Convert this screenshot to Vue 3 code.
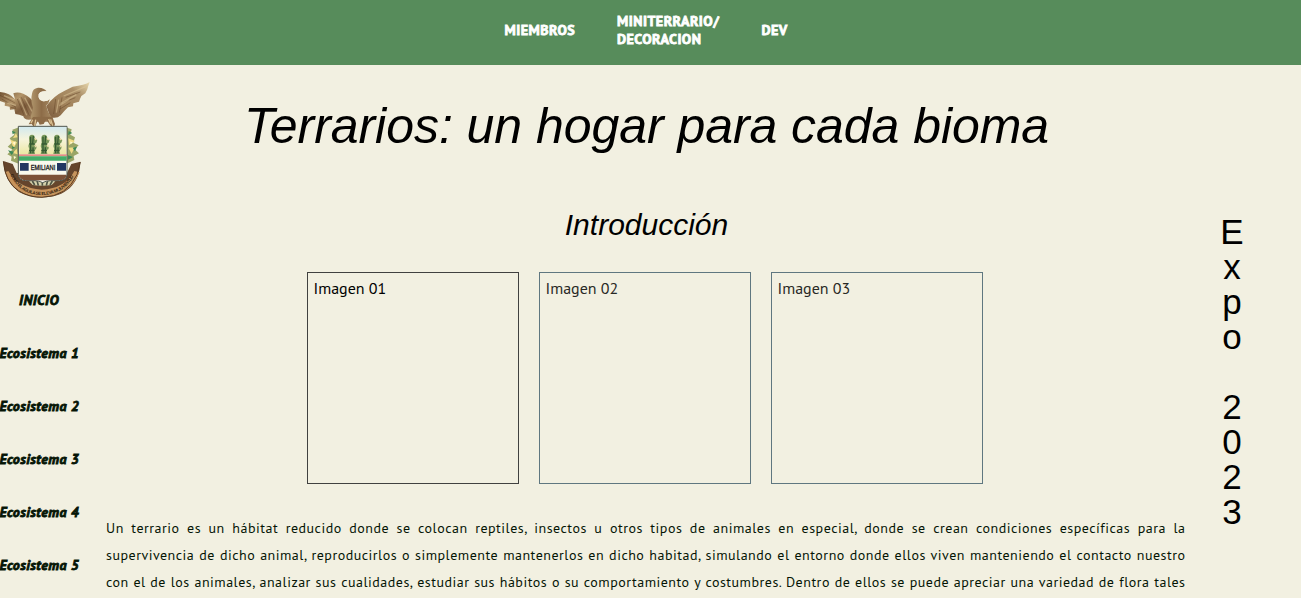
<script setup>
const ecosystems = ['Ecosistema 1', 'Ecosistema 2', 'Ecosistema 3', 'Ecosistema 4', 'Ecosistema 5']
const images = ['Imagen 01', 'Imagen 02', 'Imagen 03']
const expo = ['E', 'x', 'p', 'o', '\u00a0', '2', '0', '2', '3']
const lines = [
  'Un terrario es un hábitat reducido donde se colocan reptiles, insectos u otros tipos de animales en especial, donde se crean condiciones específicas para la',
  'supervivencia de dicho animal, reproducirlos o simplemente mantenerlos en dicho habitad, simulando el entorno donde ellos viven manteniendo el contacto nuestro',
  'con el de los animales, analizar sus cualidades, estudiar sus hábitos o su comportamiento y costumbres. Dentro de ellos se puede apreciar una variedad de flora tales',
]
</script>

<template>
  <div class="page">
    <header class="topbar">
      <a class="members">MIEMBROS</a>
      <a class="mini">MINITERRARIO/<br />DECORACION</a>
      <a class="dev">DEV</a>
    </header>
    <div class="body">
      <aside class="side">
        <svg class="crest" viewBox="0 0 300 420" width="100" height="140">
          <defs>
            <linearGradient id="wing" x1="0" y1="0" x2="1" y2="1">
              <stop offset="0" stop-color="#715232" />
              <stop offset=".35" stop-color="#b3956a" />
              <stop offset=".6" stop-color="#7d5c3c" />
              <stop offset="1" stop-color="#a58660" />
            </linearGradient>
            <linearGradient id="wingr" x1="1" y1="0" x2="0" y2="1">
              <stop offset="0" stop-color="#eadbb0" />
              <stop offset=".3" stop-color="#ab8f68" />
              <stop offset=".6" stop-color="#a1825a" />
              <stop offset="1" stop-color="#7d5d3f" />
            </linearGradient>
            <linearGradient id="chest" x1="0" y1="0" x2="1" y2="0">
              <stop offset="0" stop-color="#b0966c" />
              <stop offset=".5" stop-color="#8d6c48" />
              <stop offset="1" stop-color="#a78b64" />
            </linearGradient>
            <linearGradient id="sky" x1="0" y1="0" x2="0" y2="1">
              <stop offset="0" stop-color="#d3e9ee" />
              <stop offset=".45" stop-color="#f6f4dc" />
              <stop offset="1" stop-color="#ebe8a4" />
            </linearGradient>
            <path id="motto" d="M31 314 Q58 374 124 375 Q194 374 226 310" />
          </defs>
          <!-- leaves and flowers beside the shield -->
          <g>
            <path d="M53 173 L37 179 L43 194 L29 205 L37 217 L23 230 L37 239 L22 253 L35 260 L33 272 L58 282 V173Z" fill="#9aa566" />
            <path d="M201 173 L215 178 L211 194 L225 202 L220 218 L236 226 L224 238 L237 250 L221 258 L223 270 L198 282Z" fill="#9aa566" />
            <path d="M48 190l5 12-14 2zM31 209l20 8-10 18zM50 236l3 17-15-4zM205 205l20 8-18 13zM205 233l19-1-9 19z" fill="#f3dc86" />
            <path d="M36 182l11 5-9 6zM24 241l18 4-7 10zM206 183l11 6-13 6zM218 233l13-3-6 14zM204 256l15 5-15 8zM37 228l8 5-9 4z" fill="#3c8957" />
            <path d="M38 218l9-4-3 12zM211 214l8 4-8 4zM41 258l8 3-7 7z" fill="#fff9d0" />
          </g>
          <!-- eagle -->
          <path d="M0 66 Q30 69 45 88 L40 70 Q52 65 70 71 Q93 80 108 107 L102 147 Q73 154 70 139 L58 134 L46 132 L43 118 L30 119 L29 110 L14 107 L15 98 L0 93Z" fill="url(#wing)" />
          <path d="M139 108 Q160 78 194 62 L218 50 Q254 46 269 36 L264 50 L262 58 L256 70 L244 78 L240 87 L237 95 L220 100 L219 109 L204 112 L193 123 L182 136 Q172 147 151 142Z" fill="url(#wingr)" />
          <path d="M0 76 L44 98 M5 87 L48 112 M32 112L48 115 M52 87 L72 136 M64 82 L88 137 M241 66 L197 82 M226 83L190 97 M211 98 L180 117 M186 82L178 128 M167 87L161 132" fill="none" stroke="#604024" stroke-width="3" opacity=".45" />
          <path d="M12 77 L44 90 M22 99 L48 106 M58 84 L80 136 M74 83L96 124 M257 50 L191 78 M229 74 L181 101 M207 88 L178 107 M176 89L169 128" fill="none" stroke="#dfc99b" stroke-width="4" opacity=".5" />
          <path d="M96 71 Q98 55 114 53 Q131 52 140 64 Q121 61 116 73 Q113 90 129 94 Q143 95 149 87 Q147 101 139 106 Q143 130 157 143 L151 155 L99 155 L92 142 L99 113 Q91 91 96 71Z" fill="url(#chest)" />
          <path d="M140 64 Q121 61 116 73 Q113 90 129 94 Q143 95 149 87 Q152 72 140 64Z" fill="#f2f0e1" />
          <path d="M99 141 L86 163 L95 162 L104 175 L113 151 L119 164 L131 162 L139 148 L148 163 L160 176 L165 162 L157 140Z" fill="#8c6b47" />
          <path d="M98 149l-5 11M107 149l-3 20M146 147l6 14M152 148l7 22" stroke="#dcc293" stroke-width="4" />
          <!-- ribbon -->
          <path d="M10 273 L38 282 L50 309 L201 309 L214 282 L241 275 C239 342 197 382 126 382 C57 382 13 341 10 273Z" fill="#65452c" />
          <path d="M25 303 Q55 355 125 359 Q196 356 223 303 L239 307 Q207 381 126 381 Q43 379 14 307Z" fill="#c7945c" />
          <path d="M10 274 Q15 335 56 364 Q91 383 126 382 Q201 380 231 314 L241 276" fill="none" stroke="#58391f" stroke-width="3" />
          <path d="M87 334 Q127 327 166 334 L155 345 Q126 350 98 345Z" fill="#d5d2ac" />
          <path d="M97 333l7 12M111 331l4 16M127 330v17M143 331l-4 16M157 333l-7 12" stroke="#4f5445" stroke-width="5" />
          <text class="motto"><textPath href="#motto" textLength="236">COMO EL AGUILA SE ELEVA MI JUVENTUD</textPath></text>
          <!-- shield -->
          <path d="M55 169 H201 V315 Q199 330 179 332 H151 Q139 332 128 338 Q117 332 105 332 H76 Q57 330 55 314Z" fill="#faf9ed" stroke="#4d5650" stroke-width="3" />
          <path d="M58 171H199V252H58Z" fill="url(#sky)" />
          <g v-for="x in [96, 133, 171]" :key="x" :transform="`translate(${x} 0)`">
            <path d="M-9 205 Q-9 194 0 194 Q9 195 9 205 L16 210 L13 218 L8 222 L14 230 L12 238 L7 240 L9 252 H-11 L-8 238 L-11 228 L-8 218Z" fill="#78975a" />
            <path d="M-4 200V250M4 198L2 220M3 232V250M-8 222H8M-9 241H8" fill="none" stroke="#345a32" stroke-width="4" />
            <path d="M8 205L13 210M8 226L13 231" stroke="#f2ddb0" stroke-width="4" />
          </g>
          <path d="M57 253H200V259H57Z" fill="#e58f84" />
          <path d="M57 259H200V272H57Z" fill="#45ad68" />
          <path d="M60 279H86V302H60ZM171 279H198V302H171Z" fill="#223661" />
          <path d="M56 314H200Q199 330 177 331H79Q59 330 56 314Z" fill="#7d5238" />
          <text class="crest-name" x="92" y="299" textLength="74" lengthAdjust="spacingAndGlyphs">EMILIANI</text>
        </svg>
        <nav class="side-nav">
          <a class="home">INICIO</a>
          <a v-for="e in ecosystems" :key="e">{{ e }}</a>
        </nav>
      </aside>
      <main class="content">
        <h1>Terrarios: un hogar para cada bioma</h1>
        <h2>Introducción</h2>
        <div class="gallery">
          <div v-for="i in images" :key="i" class="frame">{{ i }}</div>
        </div>
        <p class="intro"><span v-for="l in lines" :key="l">{{ l }}</span></p>
      </main>
      <aside class="expo">
        <span v-for="(c, i) in expo" :key="i">{{ c }}</span>
      </aside>
    </div>
  </div>
</template>

<style>
body {
  margin: 0;
  overflow: hidden;
  background: #f2f0e1;
}
</style>

<style scoped>
.page {
  height: 598px;
  overflow: hidden;
  background: #f2f0e1;
  color: #000;
  font-family: "PT Sans", "Noto Sans", sans-serif;
}
.topbar {
  box-sizing: border-box;
  height: 65px;
  padding: 0 0 5px 504.5px;
  display: flex;
  align-items: center;
  background: #578c5b;
  color: #fff;
  font-size: 14px;
  line-height: 18px;
  font-weight: 800;
  letter-spacing: 0.5px;
  white-space: nowrap;
  -webkit-text-stroke: 0.8px #fff;
}
.members {
  width: 112.5px;
}
.mini {
  width: 144.5px;
}
.body {
  display: grid;
  grid-template-columns: 106px 1079px 116px;
  height: 533px;
}
.crest {
  display: block;
  margin: 5px 0 0 -0.5px;
}
.crest-name {
  font: 20px "Liberation Sans", sans-serif;
  fill: #111;
  stroke: #111;
  stroke-width: 0.8;
}
.motto {
  font: bold 13px "Liberation Sans", sans-serif;
  fill: #2b1a0d;
}
.side-nav {
  display: flex;
  flex-direction: column;
  width: 79px;
  margin: 64px 0 0 -0.5px;
  font-size: 14px;
  font-weight: 800;
  font-style: italic;
  color: #051505;
  -webkit-text-stroke: 0.8px #051505;
}
.side-nav a {
  height: 53px;
  line-height: 53px;
  letter-spacing: 0.47px;
  white-space: nowrap;
}
.side-nav .home {
  text-align: center;
}
h1,
h2 {
  margin: 0;
  font-family: "Liberation Sans", Arial, sans-serif;
  font-weight: 400;
  font-style: italic;
  text-align: center;
}
h1 {
  padding: 32px 0 0 2px;
  font-size: 50px;
  line-height: 58px;
  letter-spacing: -0.05px;
}
h2 {
  margin-top: 53px;
  padding-left: 2px;
  font-size: 30px;
  line-height: 34px;
}
.gallery {
  display: flex;
  gap: 20px;
  margin: 30px 0 0 201px;
}
.frame {
  box-sizing: border-box;
  width: 212px;
  height: 212px;
  padding: 4px 5.5px;
  border: 1px solid #5f7780;
  color: #292925;
  font-size: 16px;
  line-height: 22px;
}
.frame:first-child {
  border-color: #414140;
  color: #000;
}
.intro {
  margin: 31px 0 0;
  color: #051505;
  font-size: 14px;
  line-height: 27px;
  letter-spacing: 0.5px;
}
.intro span {
  display: block;
  width: 1079.5px;
  white-space: nowrap;
  text-align: justify;
  text-align-last: justify;
}
.expo {
  display: flex;
  flex-direction: column;
  align-items: center;
  padding: 149px 22px 0 0;
  font: 35px/35px "Liberation Sans", Arial, sans-serif;
}
.expo span {
  height: 35px;
}
</style>
